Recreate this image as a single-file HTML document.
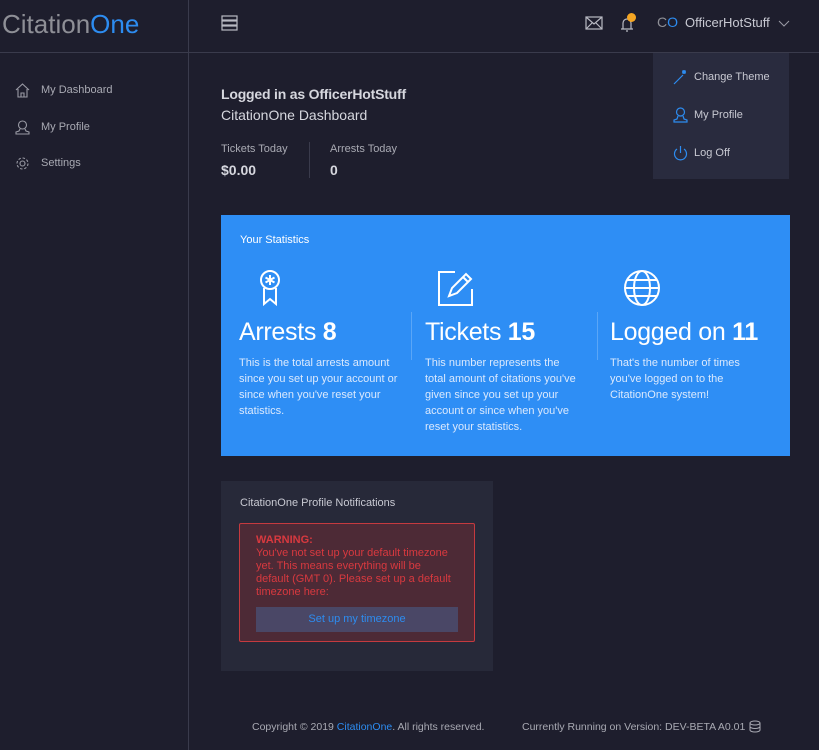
<!DOCTYPE html>
<html><head><style>
*{margin:0;padding:0;box-sizing:border-box}
body{width:819px;height:750px;background:#1e1e2d;font-family:"Liberation Sans",sans-serif;color:#c8c9d2;position:relative;overflow:hidden;font-size:12px}
.a{position:absolute}
.wt{color:#fff}
</style></head><body>
<div class="a" style="left:188px;top:0;width:1px;height:750px;background:#3a3b4c"></div>
<div class="a" style="left:0;top:52px;width:819px;height:1px;background:#3a3b4c"></div>
<div class="a" style="left:2px;top:9px;font-size:26px;color:#8e8f96">Citation<span style="color:#2d8cf0">One</span></div>
<svg class="a" style="left:221px;top:15px" width="17" height="16" viewBox="0 0 17 16" fill="none" stroke="#b9bac3" stroke-width="1.2"><rect x="1" y="1" width="15" height="4"/><rect x="1" y="6" width="15" height="4"/><rect x="1" y="11" width="15" height="4"/></svg>
<svg class="a" style="left:585px;top:16px" width="18" height="14" fill="none" stroke="#b9bac3" stroke-width="1.2"><rect x="1" y="1" width="16" height="12"/><path d="M1 1l8 7 8-7M1 13l6-6M17 13l-6-6"/></svg>
<svg class="a" style="left:618px;top:14px" width="18" height="18" fill="none" stroke="#b9bac3" stroke-width="1.2"><path d="M3 15h12M5 15V9a4 4 0 018 0v6M8 17h2"/></svg>
<div class="a" style="left:627px;top:13px;width:9px;height:9px;border-radius:50%;background:#f5a623"></div>
<div class="a" style="left:657px;top:14px;font-size:14px;color:#8e8f96">C<span style="color:#2d8cf0">O</span></div>
<div class="a" style="left:685px;top:15px;font-size:13px;color:#c8c9d2">OfficerHotStuff</div>
<svg class="a" style="left:778px;top:20px" width="12" height="7" fill="none" stroke="#9a9ba5"><path d="M1 1l5 5 5-5"/></svg>
<div class="a" style="left:653px;top:53px;width:136px;height:126px;background:#292b3e"></div>
<svg class="a" style="left:673px;top:69px" width="16" height="16" fill="none" stroke="#2d8cf0" stroke-width="1.2"><path d="M1 15L10 6M11 1v4M9 3h4M9.5 1.5l3 3M12.5 1.5l-3 3"/></svg>
<div class="a" style="left:694px;top:71px;font-size:11px">Change Theme</div>
<svg class="a" style="left:673px;top:107px" width="15" height="16" fill="none" stroke="#2d8cf0" stroke-width="1.2"><circle cx="7.5" cy="5" r="4"/><path d="M5 9l-1 3-3 1v2h13v-2l-3-1-1-3"/></svg>
<div class="a" style="left:694px;top:109px;font-size:11px">My Profile</div>
<svg class="a" style="left:673px;top:145px" width="15" height="16" fill="none" stroke="#2d8cf0" stroke-width="1.2"><path d="M7.5 1v7M4 4a6 6 0 107 0"/></svg>
<div class="a" style="left:694px;top:147px;font-size:11px">Log Off</div>

<svg class="a" style="left:15px;top:83px" width="15" height="15" fill="none" stroke="#9a9ba5" stroke-width="1.1"><path d="M1 7L7.5 1 14 7M3 6v8h9V6M6 14v-4h3v4"/></svg>
<div class="a" style="left:41px;top:84px;font-size:11px;color:#a9aab3">My Dashboard</div>
<svg class="a" style="left:15px;top:120px" width="15" height="15" fill="none" stroke="#9a9ba5" stroke-width="1.1"><circle cx="7.5" cy="5" r="4"/><path d="M5 9l-1 2-3 1v2h13v-2l-3-1-1-2"/></svg>
<div class="a" style="left:41px;top:121px;font-size:11px;color:#a9aab3">My Profile</div>
<svg class="a" style="left:15px;top:156px" width="15" height="15" fill="none" stroke="#9a9ba5" stroke-width="1.1"><circle cx="7.5" cy="7.5" r="2.5"/><circle cx="7.5" cy="7.5" r="5.5" stroke-dasharray="2.5 1.8"/></svg>
<div class="a" style="left:41px;top:157px;font-size:11px;color:#a9aab3">Settings</div>

<div class="a" style="left:221px;top:86px;font-size:14px;font-weight:bold;color:#d6d7de;letter-spacing:-0.2px">Logged in as OfficerHotStuff</div>
<div class="a" style="left:221px;top:107px;font-size:14px;color:#d6d7de">CitationOne Dashboard</div>
<div class="a" style="left:221px;top:143px;font-size:11px;color:#a9aab3">Tickets Today</div>
<div class="a" style="left:221px;top:162px;font-size:14px;font-weight:bold;color:#d6d7de">$0.00</div>
<div class="a" style="left:309px;top:142px;width:1px;height:36px;background:#3a3b4c"></div>
<div class="a" style="left:330px;top:143px;font-size:11px;color:#a9aab3">Arrests Today</div>
<div class="a" style="left:330px;top:162px;font-size:14px;font-weight:bold;color:#d6d7de">0</div>

<div class="a" style="left:221px;top:215px;width:569px;height:241px;background:#2e8ef5"></div>
<div class="a wt" style="left:240px;top:234px;font-size:11px">Your Statistics</div>
<svg class="a" style="left:258px;top:270px" width="24" height="36" fill="none" stroke="#fff" stroke-width="2"><circle cx="12" cy="10" r="9"/><path d="M12 5v10M7.5 7.5l9 5M16.5 7.5l-9 5M6 18v16l6-5 6 5V18"/></svg>
<svg class="a" style="left:437px;top:270px" width="38" height="36" fill="none" stroke="#fff" stroke-width="2"><path d="M18 2H2v33h33V19"/><path d="M12 26l3-8 14-14 5 5-14 14z M26 7l5 5"/></svg>
<svg class="a" style="left:623px;top:270px" width="38" height="36" fill="none" stroke="#fff" stroke-width="2"><circle cx="19" cy="18" r="17"/><ellipse cx="19" cy="18" rx="8" ry="17"/><path d="M2 18h34M4 10h30M4 26h30"/></svg>
<div class="a" style="left:411px;top:312px;width:1px;height:48px;background:#5aa6f7"></div>
<div class="a" style="left:597px;top:312px;width:1px;height:48px;background:#5aa6f7"></div>
<div class="a wt" style="left:239px;top:318px;font-size:25px;letter-spacing:-0.3px">Arrests <b>8</b></div>
<div class="a wt" style="left:425px;top:318px;font-size:25px;letter-spacing:-0.3px">Tickets <b>15</b></div>
<div class="a wt" style="left:610px;top:318px;font-size:25px;letter-spacing:-0.3px">Logged on <b>11</b></div>
<div class="a" style="left:239px;top:355px;width:160px;font-size:11px;line-height:16px;color:#dbe9fd">This is the total arrests amount since you set up your account or since when you've reset your statistics.</div>
<div class="a" style="left:425px;top:355px;width:158px;font-size:11px;line-height:16px;color:#dbe9fd">This number represents the total amount of citations you've given since you set up your account or since when you've reset your statistics.</div>
<div class="a" style="left:610px;top:355px;width:140px;font-size:11px;line-height:16px;color:#dbe9fd">That's the number of times you've logged on to the CitationOne system!</div>

<div class="a" style="left:221px;top:481px;width:272px;height:190px;background:#272939"></div>
<div class="a" style="left:240px;top:497px;font-size:11px;color:#c8c9d2">CitationOne Profile Notifications</div>
<div class="a" style="left:239px;top:523px;width:236px;height:119px;background:#4d2a36;border:1px solid #c53a3f;border-radius:2px"></div>
<div class="a" style="left:256px;top:534px;width:200px;font-size:11px;line-height:13px;color:#d8393f"><b>WARNING:</b><br>You've not set up your default timezone yet. This means everything will be default (GMT 0). Please set up a default timezone here:</div>
<div class="a" style="left:256px;top:607px;width:202px;height:25px;background:#4a4766;color:#2d8cf0;font-size:11px;text-align:center;line-height:25px">Set up my timezone</div>

<div class="a" style="left:252px;top:721px;font-size:10.5px;color:#a9aab3">Copyright © 2019 <span style="color:#2d8cf0">CitationOne</span>. All rights reserved.</div>
<div class="a" style="left:522px;top:721px;font-size:10.5px;color:#a9aab3">Currently Running on Version: DEV-BETA A0.01</div>
<svg class="a" style="left:749px;top:720px" width="12" height="13" fill="none" stroke="#a9aab3"><ellipse cx="6" cy="3" rx="5" ry="2"/><path d="M1 3v7c0 1 2 2 5 2s5-1 5-2V3M1 6.5c0 1 2 2 5 2s5-1 5-2"/></svg>
</body></html>
